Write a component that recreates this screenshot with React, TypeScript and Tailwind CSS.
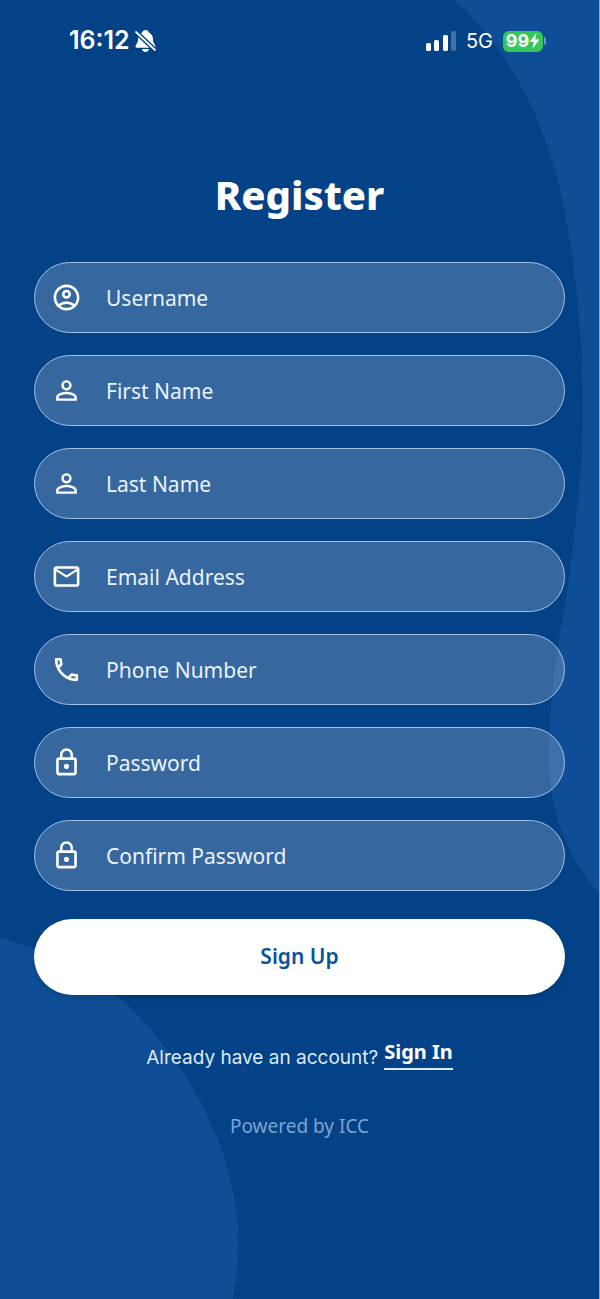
import { useState } from "react";
import {
  MdLockOutline,
  MdMailOutline,
  MdOutlineAccountCircle,
  MdOutlinePhone,
  MdPersonOutline
} from "react-icons/md";

const fields = [
  { id: "username", label: "Username", type: "text", icon: MdOutlineAccountCircle },
  { id: "firstName", label: "First Name", type: "text", icon: MdPersonOutline },
  { id: "lastName", label: "Last Name", type: "text", icon: MdPersonOutline },
  { id: "email", label: "Email Address", type: "email", icon: MdMailOutline },
  { id: "phone", label: "Phone Number", type: "tel", icon: MdOutlinePhone },
  { id: "password", label: "Password", type: "password", icon: MdLockOutline },
  { id: "confirmPassword", label: "Confirm Password", type: "password", icon: MdLockOutline }
];

function Background() {
  return (
    <svg
      className="absolute inset-0 -z-10 h-full w-full"
      viewBox="0 0 600 1299"
      preserveAspectRatio="none"
      fill="#0d4e96"
      aria-hidden="true"
    >
      <path d="M455 0C492 32 526 82 548 145C570 208 584 310 584 410C584 455 578 520 569 585C560 640 550 690 550 760C550 805 567 857 600 892V0Z" />
      <path d="M0 937C60 952 105 980 140 1017C200 1080 239 1165 239 1240Q239 1270 233 1299H0Z" />
    </svg>
  );
}

function StatusBar() {
  return (
    <div className="flex h-8 items-center justify-between pr-[53px] pl-[69px] font-['Inter',sans-serif]">
      <div className="flex items-center gap-1">
        <span className="text-[25px] font-semibold">16:12</span>
        <svg width="23" height="24" viewBox="0 0 23 24" aria-hidden="true">
          <path
            d="M11.5 1C13.300 1 14.500 2 14.800 3.500C17.800 4.700 19 7.500 19 10.500C19 14.500 21.500 15.500 21.500 17.500Q21.500 18.700 20 18.700H3Q1.500 18.700 1.500 17.500C1.500 15.500 4 14.500 4 10.500C4 7.500 5.200 4.700 8.200 3.500C8.500 2 9.700 1 11.500 1Z"
            fill="currentColor"
          />
          <path d="M8 20H15Q14.200 23 11.500 23T8 20Z" fill="currentColor" />
          <path d="M2 3L21 21" stroke="#044287" strokeWidth="4.500" />
          <path d="M2 3L21 21" stroke="currentColor" strokeWidth="1.800" strokeLinecap="round" />
        </svg>
      </div>
      <div className="flex items-center gap-2.5">
        <svg width="30" height="20" viewBox="0 0 30 20" fill="currentColor" aria-hidden="true">
          <rect x="0" y="12" width="5" height="8" rx="1.500" />
          <rect x="8" y="9" width="5" height="11" rx="1.500" />
          <rect x="17" y="4" width="5" height="16" rx="1.500" />
          <rect x="25" y="0" width="5" height="20" rx="1.500" opacity="0.250" />
        </svg>
        <span className="text-xl">5G</span>
        <div className="flex items-center gap-px">
          <div className="flex h-[21px] w-10 items-center justify-center rounded-md bg-[#34c759]">
            <span className="text-lg font-bold">99</span>
            <svg width="11" height="16" viewBox="0 0 11 16" fill="currentColor" aria-hidden="true">
              <path d="M7.500 0L0.500 9H4.800L3.300 16L10.500 6.500H6.200Z" />
            </svg>
          </div>
          <span className="h-2 w-0.5 rounded-r bg-white/40" />
        </div>
      </div>
    </div>
  );
}

export default function App() {
  const [values, setValues] = useState<Record<string, string>>({});

  return (
    <main className="relative isolate min-h-screen overflow-hidden border-r border-[#8ba6c8] bg-[#044287] pt-[25px] pb-40 font-['Noto_Sans',sans-serif] text-white">
      <Background />
      <StatusBar />

      <form
        className="flex flex-col px-[34px] pt-[114px]"
        onSubmit={(event) => event.preventDefault()}
      >
        <h1 className="text-center text-[40px] leading-12 font-extrabold">Register</h1>

        <div className="mt-[43px] flex flex-col gap-[22px]">
          {fields.map(({ id, label, type, icon: Icon }) => (
            <div
              key={id}
              className="flex h-[71px] items-center gap-6 rounded-full border border-[#a3c0e6] bg-white/20 px-4"
            >
              <label htmlFor={id} aria-label={label}>
                <Icon size={31} />
              </label>
              <input
                id={id}
                type={type}
                placeholder={label}
                value={values[id] ?? ""}
                onChange={(event) => setValues({ ...values, [id]: event.target.value })}
                className="h-full min-w-0 flex-1 text-[21px] outline-none placeholder:text-[#eaf3ff]"
              />
            </div>
          ))}
        </div>

        <button
          type="submit"
          className="mt-7 h-19 rounded-full bg-white text-[21px] font-semibold text-[#07549a] shadow-md"
        >
          Sign Up
        </button>
      </form>

      <div className="mt-[43px] flex justify-center gap-1.5">
        <p className="pt-2 font-['Inter',sans-serif] text-[19px] leading-6 text-[#dceafb]">
          Already have an account?
        </p>
        <a href="#" className="border-b-2 border-[#dceafb] text-xl leading-7 font-bold">
          Sign In
        </a>
      </div>
      <p className="mt-[42px] text-center text-[19px] leading-7 text-[#7fa3d1]">Powered by ICC</p>
    </main>
  );
}
